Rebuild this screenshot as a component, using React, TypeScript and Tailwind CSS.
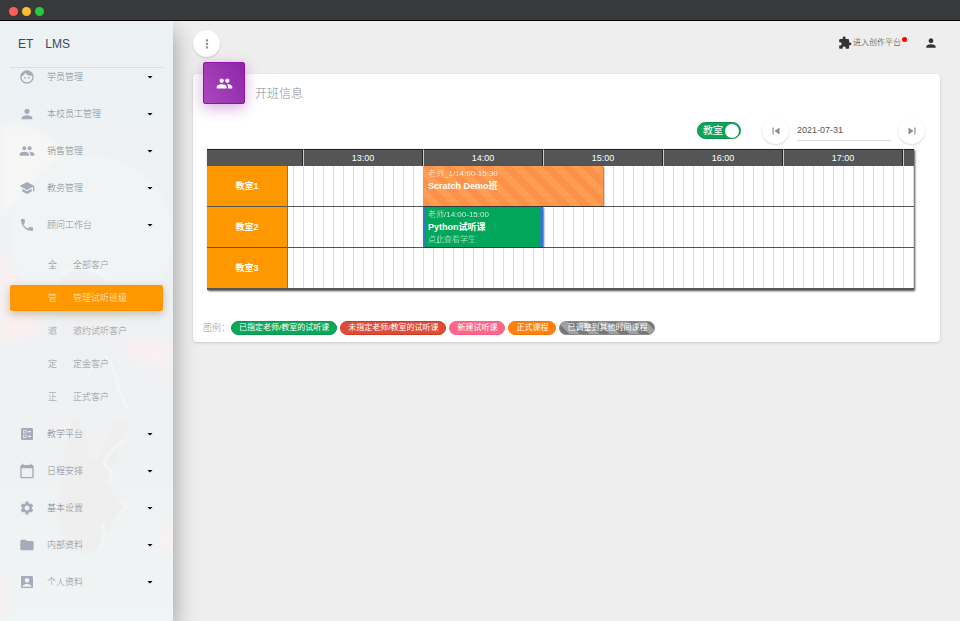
import { useState } from "react";
import type { IconType } from "react-icons";
import {
  MdAccountBox,
  MdArrowDropDown,
  MdBallot,
  MdCalendarToday,
  MdExtension,
  MdFace,
  MdFolder,
  MdGroup,
  MdMoreVert,
  MdPerson,
  MdPhone,
  MdSchool,
  MdSettings,
  MdSkipNext,
  MdSkipPrevious,
} from "react-icons/md";

type NavItem = { label: string; icon: IconType };

type Booking = {
  info: string;
  title: string;
  note?: string;
  start: number;
  end: number;
  style: string;
};

const topNav: NavItem[] = [
  { label: "学员管理", icon: MdFace },
  { label: "本校员工管理", icon: MdPerson },
  { label: "销售管理", icon: MdGroup },
  { label: "教务管理", icon: MdSchool },
  { label: "顾问工作台", icon: MdPhone },
];

const subNav = ["全部客户", "管理试听班级", "邀约试听客户", "定金客户", "正式客户"];

const bottomNav: NavItem[] = [
  { label: "教学平台", icon: MdBallot },
  { label: "日程安排", icon: MdCalendarToday },
  { label: "基本设置", icon: MdSettings },
  { label: "内部资料", icon: MdFolder },
  { label: "个人资料", icon: MdAccountBox },
];

const hours = ["13:00", "14:00", "15:00", "16:00", "17:00"];

// minutes since midnight at the left edge of the timeline, and its scale
const TIMELINE_START = 772.5;
const PX_PER_MINUTE = 2;

const rooms: { name: string; bookings: Booking[] }[] = [
  {
    name: "教室1",
    bookings: [
      {
        info: "老师_1/14:00-15:30",
        title: "Scratch Demo班",
        start: 840,
        end: 930,
        style:
          "pl-[5px] bg-[#ff9e52] bg-[repeating-linear-gradient(45deg,#fb914a_0px,#fb914a_7px,#ff9e52_7px,#ff9e52_14px)]",
      },
    ],
  },
  {
    name: "教室2",
    bookings: [
      {
        info: "老师/14:00-15:00",
        title: "Python试听课",
        note: "点此查看学生",
        start: 840,
        end: 900,
        style: "pl-[2px] bg-[#00a65a] border-l-3 border-r-4 border-[#3278c8]",
      },
    ],
  },
  { name: "教室3", bookings: [] },
];

const legend = [
  { label: "已指定老师/教室的试听课", style: "bg-[#0ca65a] border-[#08994f]" },
  { label: "未指定老师/教室的试听课", style: "bg-[#dd4b39] border-[#d23a20]" },
  { label: "新建试听课", style: "bg-[#ff6688] border-[#ff5c8a]" },
  { label: "正式课程", style: "bg-[#ff7f10] border-[#f87400]" },
  {
    label: "已调整到其他时间课程",
    style:
      "border-[#8a8a8a] bg-[repeating-linear-gradient(45deg,#777_0px,#777_7px,#a0a0a0_7px,#a0a0a0_14px)]",
  },
];

export default function App() {
  const [active, setActive] = useState("管理试听班级");
  const [byRoom, setByRoom] = useState(true);
  const [date, setDate] = useState("2021-07-31");

  return (
    <div className="flex min-h-screen flex-col bg-[#eeeeee] font-['Liberation_Sans','Noto_Sans_CJK_SC',sans-serif] text-[9px] leading-3">
      <header className="relative z-20 flex h-[21px] items-center gap-1 border-b border-black bg-[#38393b] px-[9px] pt-[2px]">
        <span className="size-[9px] rounded-full bg-[#ff5f57]" />
        <span className="size-[9px] rounded-full bg-[#febc2e]" />
        <span className="size-[9px] rounded-full bg-[#28c840]" />
      </header>

      <div className="flex flex-1">
        <Sidebar active={active} onSelect={setActive} />

        <main className="min-w-0 flex-1 px-5 pt-[9px]">
          {/* Top bar */}
          <div className="flex items-center justify-between">
            <RoundButton label="菜单" icon={MdMoreVert} />
            <div className="flex items-center gap-[18px] pr-[2px] pb-[2px] text-[#333]">
              <a href="#create" className="relative flex items-center gap-px pr-[5px] text-[8px] font-light">
                <MdExtension size={14} />
                进入创作平台
                <span className="absolute top-px -right-px size-[5px] rounded-full bg-[#ff0000]" />
              </a>
              <button aria-label="账户">
                <MdPerson size={14} />
              </button>
            </div>
          </div>

          {/* Schedule card */}
          <section className="mt-[17px] flow-root rounded-[4px] bg-white pr-[15px] pb-[7px] pl-[10px] shadow-[0_1px_3px_rgba(0,0,0,0.16)]">
            <div className="-mt-3 flex items-end gap-[10px]">
              <div className="flex size-[42px] items-center justify-center rounded-[2px] border border-[#9012a8] bg-linear-60 from-[#ab47bc] to-[#8e24aa] text-white shadow-[0_4px_14px_rgba(156,39,176,0.4)]">
                <MdGroup size={17} />
              </div>
              <h1 className="pb-px text-[12px] leading-[18px] font-light text-[#8a8d94]">开班信息</h1>
            </div>

            <div className="mt-[13px] flex items-center justify-end">
              <label className="relative mr-[21px] flex h-[17px] w-[44px] cursor-pointer items-center rounded-full border border-[#089048] bg-[#0ca65a] pl-[5px] text-[10px] text-white">
                <input
                  type="checkbox"
                  role="switch"
                  className="peer sr-only"
                  checked={byRoom}
                  onChange={(e) => setByRoom(e.target.checked)}
                />
                教室
                <span className="ml-[2px] size-[14px] rounded-full bg-white" />
              </label>
              <RoundButton label="前一天" icon={MdSkipPrevious} />
              <input
                type="text"
                aria-label="日期"
                value={date}
                onChange={(e) => setDate(e.target.value)}
                className="mr-[7px] ml-2 h-[21px] w-[94px] border-b border-[#dcdcdc] bg-transparent text-[9px] text-[#555] outline-none"
              />
              <RoundButton label="后一天" icon={MdSkipNext} />
            </div>

            <div className="mt-[5px] mr-[11px] ml-1">
              <Schedule />
            </div>

            <div className="mt-[31px] flex flex-wrap items-center gap-[3px]">
              <span className="w-[25px] font-light whitespace-nowrap text-[#999]">图例：</span>
              {legend.map((l) => (
                <span
                  key={l.label}
                  className={`h-[14px] rounded-full border px-[7px] text-[8px] whitespace-nowrap text-white ${l.style}`}
                >
                  {l.label}
                </span>
              ))}
            </div>
          </section>
        </main>
      </div>
    </div>
  );
}

function RoundButton({ label, icon: Icon }: { label: string; icon: IconType }) {
  return (
    <button
      aria-label={label}
      className="flex size-[27px] items-center justify-center rounded-full bg-white text-[#8c8c8c] shadow-[0_1px_2px_rgba(0,0,0,0.16)]"
    >
      <Icon size={14} />
    </button>
  );
}

function Sidebar({ active, onSelect }: { active: string; onSelect: (v: string) => void }) {
  return (
    <aside className="relative z-10 w-[173px] shrink-0 bg-[#eff2f3] shadow-[0_10px_22px_rgba(0,0,0,0.38)]">
      <Backdrop />
      <div className="relative px-[10px]">
        <a
          href="#home"
          className="flex h-[47px] items-center gap-3 border-b border-[#d9dde0] pl-2 text-[12px] text-[#3c4858]"
        >
          <span>ET</span>
          <span>LMS</span>
        </a>
        <nav>
          <ul className="flex flex-col gap-[19px]">
            {topNav.map((item) => (
              <NavRow key={item.label} item={item} />
            ))}
          </ul>
          <ul className="mt-[18px] mb-[15px] flex flex-col gap-[7px]">
            {subNav.map((label) => (
              <li key={label}>
                <button
                  onClick={() => onSelect(label)}
                  className={`flex h-[26px] w-full items-center rounded-[2px] pl-[38px] font-light ${
                    active === label
                      ? "bg-[#ff9800] text-white/80 shadow-[0_3px_8px_rgba(120,110,60,0.4)]"
                      : "text-[#8e9199]"
                  }`}
                >
                  <span className="w-[25px] text-left">{label[0]}</span>
                  {label}
                </button>
              </li>
            ))}
          </ul>
          <ul className="flex flex-col gap-[19px]">
            {bottomNav.map((item) => (
              <NavRow key={item.label} item={item} />
            ))}
          </ul>
        </nav>
      </div>
    </aside>
  );
}

function NavRow({ item }: { item: NavItem }) {
  return (
    <li>
      <button className="flex h-[18px] w-full items-center pr-[7px] pl-[9px] font-light text-[#858991]">
        <item.icon size={16} className="mr-3 text-[#a5abbb]" />
        {item.label}
        <MdArrowDropDown size={12} className="ml-auto text-black" />
      </button>
    </li>
  );
}

// washed-out moon and astronaut with its reflection behind the menu
function Backdrop() {
  return (
    <svg
      aria-hidden="true"
      className="absolute inset-0 h-full w-full"
      viewBox="0 0 173 600"
      preserveAspectRatio="xMidYMid slice"
    >
      <defs>
        <linearGradient id="sky" x1="0" y1="0" x2="0" y2="1">
          <stop offset="0" stopColor="#ecf2f3" />
          <stop offset="0.6" stopColor="#eff1f3" />
          <stop offset="1" stopColor="#eff4f4" />
        </linearGradient>
        <filter id="soft" x="-50%" y="-50%" width="200%" height="200%">
          <feGaussianBlur stdDeviation="5" />
        </filter>
        <filter id="edge" x="-20%" y="-20%" width="140%" height="140%">
          <feGaussianBlur stdDeviation="1" />
        </filter>
      </defs>
      <rect width="173" height="600" fill="url(#sky)" />
      <g filter="url(#soft)">
        <path d="M0 105 Q30 98 50 116 L66 132 L20 180 L0 200Z" fill="#f6f6f5" />
        <path d="M0 222 Q10 250 28 280 Q50 300 30 316 L0 320Z" fill="#fbeff0" />
        <path d="M125 318 Q160 312 173 325 V350 Q140 345 125 335Z" fill="#f8f0f1" />
        <path d="M0 555 Q10 570 6 590 L0 600Z" fill="#fceeef" />
        <path d="M158 510 L173 500 V535 L162 528Z" fill="#f8f1f2" />
      </g>
      <g filter="url(#edge)">
        <circle cx="92" cy="216" r="81" fill="#f1f4f4" />
        <path d="M82 62 L160 108" stroke="#f2f5f5" strokeWidth="1" />
        {/* astronaut */}
        <path
          d="M62 256 Q62 248 82 248 Q106 248 106 260 L108 275 Q122 288 125 312 L114 330 L120 365 L128 388 L124 394 L112 386 L100 350 L94 342 L84 392 L72 392 L70 360 L60 350 L62 300Z"
          fill="#eff0f1"
        />
        <path
          d="M62 254 Q68 247 84 248 Q102 249 106 260 M104 334 Q114 342 118 366 L127 388 M88 354 L97 340"
          fill="none"
          stroke="#f8f9f9"
          strokeWidth="2"
        />
        {/* reflection */}
        <path
          d="M72 398 L84 398 L90 436 L96 440 L116 398 L128 402 L120 430 L108 468 L126 486 L106 512 L98 530 Q80 536 64 528 L58 500 L62 440Z"
          fill="#efefef"
        />
        <path
          d="M124 420 Q108 428 104 444 Q116 448 108 464 M102 502 Q108 514 98 530 M120 480 L126 486 L116 498"
          fill="none"
          stroke="#f8f8f8"
          strokeWidth="2"
        />
      </g>
    </svg>
  );
}

function Schedule() {
  return (
    <table className="w-full table-fixed border-separate border-spacing-0 border-b border-[#555] shadow-[1px_1px_2px_rgba(0,0,0,0.7)]">
      <colgroup>
        <col className="w-[81px]" />
        <col className="w-[15px]" />
        {hours.map((h) => (
          <col key={h} className="w-[120px]" />
        ))}
        <col />
      </colgroup>
      <thead>
        <tr className="h-[17px] bg-[#555] text-white">
          <td colSpan={2} className="border-t border-r border-[#222] p-0" />
          {hours.map((h) => (
            <th
              key={h}
              scope="col"
              className="border-t border-r border-l border-[#222] border-l-[#ccc] p-0 font-normal"
            >
              {h}
            </th>
          ))}
          <td className="border-t border-l border-[#222] border-l-[#ccc] p-0" />
        </tr>
      </thead>
      <tbody>
        {rooms.map((room) => (
          <tr key={room.name} className="h-[41px]">
            <th
              scope="row"
              className="border-r border-b border-[#777] border-b-[#555] bg-[#ff9800] p-0 font-bold text-white"
            >
              {room.name}
            </th>
            <td
              colSpan={hours.length + 2}
              className="relative border-b border-[#555] bg-white bg-[linear-gradient(90deg,#dcdcdc_1px,transparent_1px)] bg-[length:10px_100%] bg-[position:5px_0px] p-0"
            >
              {room.bookings.map((b) => (
                <button
                  key={b.title}
                  className={`absolute inset-y-0 flex flex-col overflow-hidden pt-[2px] text-left whitespace-nowrap text-white shadow-[1px_1px_2px_rgba(0,0,0,0.5)] ${b.style}`}
                  style={{
                    left: (b.start - TIMELINE_START) * PX_PER_MINUTE,
                    width: (b.end - b.start) * PX_PER_MINUTE,
                  }}
                >
                  <span className="text-[8px] font-light opacity-80">{b.info}</span>
                  <span className="font-bold">{b.title}</span>
                  {b.note && <span className="pt-px text-[8px] font-light opacity-80">{b.note}</span>}
                </button>
              ))}
            </td>
          </tr>
        ))}
      </tbody>
    </table>
  );
}
